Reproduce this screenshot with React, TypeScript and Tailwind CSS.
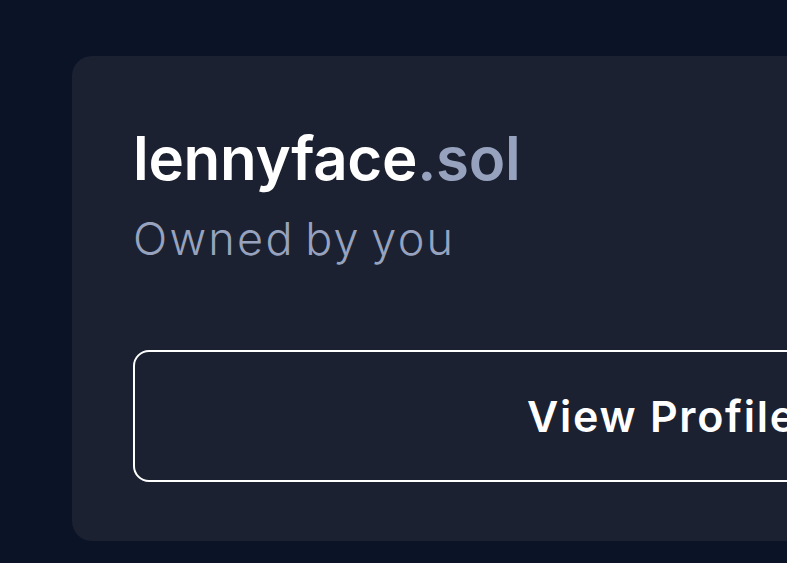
export default function App() {
  return (
    <div className="h-[563px] w-[787px] overflow-hidden bg-[#0b1326] pt-[56px] pl-[72px] font-['Inter','Liberation_Sans',sans-serif]">
      <div className="w-[1180px] rounded-[20px] bg-[#1b2130] px-[61px] pt-[66px] pb-[59px]">
        <div className="text-[60px] font-semibold leading-[72px] tracking-[-0.005em] text-white">
          lennyface<span className="text-[#97a3be]">.sol</span>
        </div>
        <div className="mt-[19px] text-[45px] font-light leading-[52px] tracking-[0.05em] text-[#97a3be] [word-spacing:-0.1em]">
          Owned by you
        </div>
        <button className="mt-[85px] flex h-[132px] w-full items-center justify-center rounded-[16px] border-2 border-white text-[43px] font-semibold tracking-[0.04em] text-white">
          View Profile
        </button>
      </div>
    </div>
  );
}
